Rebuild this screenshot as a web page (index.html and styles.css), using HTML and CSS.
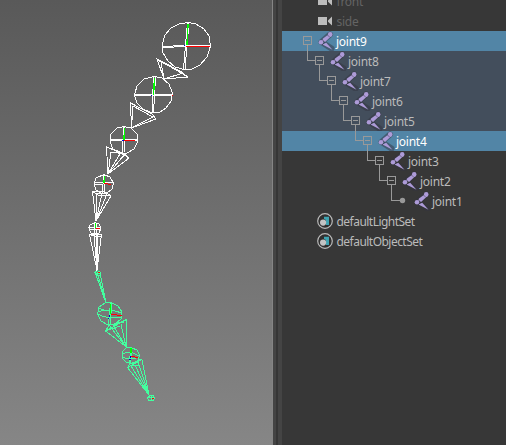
FILE: index.html
```html
<!DOCTYPE html>
<html lang="en">
<head>
<meta charset="utf-8">
<title>Outliner</title>
<link rel="stylesheet" href="styles.css">
</head>
<body>
<svg class="defs" width="0" height="0" aria-hidden="true">
  <symbol id="joint" viewBox="0 0 18 20">
    <path class="bone-outline" d="M13 3.5L4.5 11M4.500 11L14.500 17.500"/>
    <path class="bone" d="M11.500 3.500L6 7.500L5 9.500L8 11L14.500 5ZM5.500 13.500L9.200 11.800L15.500 18.800Z"/>
    <circle class="bone" cx="13.200" cy="3.400" r="2.300"/>
    <circle class="bone" cx="4" cy="11.200" r="2.300"/>
    <path class="bone-gap" d="M10.300 3.800L12.800 6.300M5.200 8.200L7.500 11.300L5 14"/>
  </symbol>
  <symbol id="toggle" viewBox="0 0 18 20">
    <path class="wire" d="M8.5 5.5H16.5V13.5H8.5ZM10 9.5H15"/>
  </symbol>
  <symbol id="camera" viewBox="0 0 18 20">
    <path class="camera" d="M1 6H10V14H1ZM11 9.5L15 5.5V14.5L11 10.8Z"/>
  </symbol>
  <symbol id="set" viewBox="0 0 18 20">
    <circle class="set-back" cx="8" cy="10" r="7.3"/>
    <path class="set-cube" d="M7 5.7H12V14H9V9L7 8Z"/>
    <circle class="set-ball" cx="6.1" cy="11.6" r="3.1"/>
  </symbol>
</svg>
<main class="app">
  <section class="viewport">
    <svg class="scene" viewBox="0 0 272 445" width="272" height="445">
      <g class="white">
        <path d="M188 22.5L196 24L204 29L209 36L210.500 46L207 57L200 65L192 69L184 69.500L175 67L168 61L163 53L162 45L165 35L171 28L179 24ZM187.500 23L185.500 45L183.500 69M189 23L187 45L185 69M162 46.500L185 45.500H210M163 47.500L185 46.500"/>
        <path d="M157 59L164 79L188 77ZM157 59L180 71L188 77M157 59L161 62L164 79L183 73L161 62"/>
        <path d="M154.500 76.500L162 78L169 84L172.500 93L171 101L166 108L160 112L152 113L143 109L137 103L134.500 95L137 86L144 79ZM153.500 77L152 113M155.500 77L153.500 113M135 94.500H172M135 95.500H172"/>
        <path d="M130.500 103L131.500 128L156 119L152 114ZM131.500 128L133 106L153 117L131.500 128"/>
        <path d="M124 126.500L131 128L137 134L137.500 142L134 149L127 153L120 153L113 149L110 142L111 134L117 128ZM123.500 127L122.500 153M125 127L124 153M110 139.500H137M110 140.500H137"/>
        <path d="M106.500 147L108 174L129 158L121 153ZM108 174L111 152L125 154L108 174L120 154M106.500 147L123 153L129 158"/>
        <path d="M104 174.500L110 177L113.500 183L112 189L107 193L101 193L96 190L94 184L96 178ZM103.500 175L102.500 193M105 175L104 193M94 182.500H113M95 184.500L103 184L113 182"/>
        <path d="M92.500 191.500L96 221L111 196L105 192ZM96 221L96 194L102 193L96 221L107 194M92.500 191.500L98 195L111 196M98 193H108"/>
        <path d="M95 222.500L99 224L101 228L99 233L95 234L91 233L89 229L90 225ZM94.500 223V234M96.500 223V234M88 227.500H101M89 229.500H101"/>
        <path d="M89.500 234.500H101.500L97 270ZM94 235L97 270L96 236M98 235L97 270M89 234L94 236H101M96.500 235V271"/>
      </g>
      <g class="green">
        <path d="M97.500 270.500L100 272.500L97 275L94.500 272.500ZM95 272L106 303M97 272L106 303M100 273L106 303M95 273H100M96 275H101"/>
        <path d="M111 302.500L118 306L122 312L121 319L115 324L108 325L101 321L97.500 314L99 307L105 303ZM110.500 303L108.500 325M112 303L111 313L110 325M98 312Q108 308 122 313M98 314Q105 319 121 317M99 308L106 311"/>
        <path d="M105.500 331L126.500 347V319.500L105.500 331L109 325L116 324L126 320M109 325L126 347M113 325L126 347M121 324L126 347M105 331L120 326M109 325L124 322"/>
        <path d="M131 347.500L137 350L139.500 355L138 361L132 364L126 362L122 358L122 352L126 348ZM130.500 348L129.500 364M132 348L130.500 364M122 354Q130 350 139 356M122 357Q130 361 139 357"/>
        <path d="M127.500 367.500L149 395L142 359.500L127.500 367.500L131 362M131 366L149 395L135 365M138 362L149 395M130 364L142 359M132 366L140 365"/>
        <path d="M150 395.500H153L155 398L153 400.500H149L147.500 398ZM148 397.500H155M151.500 395V401"/>
      </g>
      <path class="axis-y" d="M188 24L187 45M154.500 78L153.500 95M124.500 128L124 140M104.500 176L104 183M95.500 223V228M110.500 304V314M131 348V353"/>
      <path class="axis-x" d="M186 46.500H210M172 95.500H173M124 140.500H135M104 183.500L111 184.500M95.500 228.500H100M98 272.500H99.500M111 314.500L122 315.500M131 356.500L138 357.500M152 398.500H154"/>
      <path class="axis-z" d="M184 45.500H185M151 95.500H152M122 140.500H124M109.500 315V317M108 318.500H109M129 359.500H131M130.500 356V358"/>
    </svg>
  </section>
  <div class="splitter"></div>
  <section class="outliner">
    <div class="row muted"><svg class="icon"><use href="#camera"/></svg><span>front</span></div>
    <div class="row muted"><svg class="icon"><use href="#camera"/></svg><span>side</span></div>
    <div class="row node selected"><svg class="gutter"><use href="#toggle"/></svg><svg class="icon"><use href="#joint"/></svg><span>joint9</span></div>
    <div class="branch related">
      <div class="row node"><svg class="gutter"><path class="wire" d="M.5-6V9.500H8"/><use href="#toggle"/></svg><svg class="icon"><use href="#joint"/></svg><span>joint8</span></div>
      <div class="row node d2"><svg class="gutter"><path class="wire" d="M.5-6V9.500H8"/><use href="#toggle"/></svg><svg class="icon"><use href="#joint"/></svg><span>joint7</span></div>
      <div class="row node d3"><svg class="gutter"><path class="wire" d="M.5-6V9.500H8"/><use href="#toggle"/></svg><svg class="icon"><use href="#joint"/></svg><span>joint6</span></div>
      <div class="row node d4"><svg class="gutter"><path class="wire" d="M.5-6V9.500H8"/><use href="#toggle"/></svg><svg class="icon"><use href="#joint"/></svg><span>joint5</span></div>
    </div>
    <div class="row node d5 selected"><svg class="gutter"><path class="wire" d="M.5-6V9.500H8"/><use href="#toggle"/></svg><svg class="icon"><use href="#joint"/></svg><span>joint4</span></div>
    <div class="row node d6"><svg class="gutter"><path class="wire" d="M.5-6V9.500H8"/><use href="#toggle"/></svg><svg class="icon"><use href="#joint"/></svg><span>joint3</span></div>
    <div class="row node d7"><svg class="gutter"><path class="wire" d="M.5-6V9.500H8"/><use href="#toggle"/></svg><svg class="icon"><use href="#joint"/></svg><span>joint2</span></div>
    <div class="row node d8"><svg class="gutter"><path class="wire" d="M.5-6V9.500H10"/><circle class="leaf" cx="11.500" cy="9.500" r="2.700"/></svg><svg class="icon"><use href="#joint"/></svg><span>joint1</span></div>
    <div class="row set"><svg class="icon"><use href="#set"/></svg><span>defaultLightSet</span></div>
    <div class="row set"><svg class="icon"><use href="#set"/></svg><span>defaultObjectSet</span></div>
  </section>
</main>
</body>
</html>
```
FILE: styles.css
```css
body {
  margin: 0;
  overflow: hidden;
  background: #373737;
  color: #bbb;
  font: 12px/20px "Noto Sans", "Open Sans", sans-serif;
}

.defs { position: absolute; }

.app {
  display: grid;
  grid-template-columns: 272px 10px 1fr;
  height: 445px;
}

.viewport { background: linear-gradient(#595959, #868686); }

.scene {
  display: block;
  fill: none;
  stroke-width: 1;
  shape-rendering: crispEdges;
}

.white { stroke: #fff; }
.green { stroke: #43ff9f; }
.axis-x { stroke: #f00; }
.axis-y { stroke: #0f0; stroke-width: 1.400; }
.axis-z { stroke: #00c; }

.splitter {
  background: linear-gradient(90deg, #858585 1px, #444 1px 4px, #363636 4px 6px, #444 6px);
}

.outliner {
  height: 454px;
  margin-top: -9px;
  overflow: hidden;
}

.row {
  display: flex;
  height: 20px;
  padding-left: 35px;
  letter-spacing: -.25px;
  white-space: nowrap;
}

.row span { margin-left: 1.500px; padding-top: 1px; }
.set { letter-spacing: -.530px; }
.row.node { padding-left: 13px; }
.node span { margin-left: 1px; }
.row.node .gutter { margin-right: 4px; }
.branch .row.node { padding-left: 25px; }
.branch .row.node.d2 { padding-left: 37px; }
.branch .row.node.d3 { padding-left: 49px; }
.branch .row.node.d4 { padding-left: 61px; }
.row.node.d5 { padding-left: 73px; }
.row.node.d6 { padding-left: 85px; }
.row.node.d7 { padding-left: 97px; }
.row.node.d8 { padding-left: 109px; }

.related { background: #434e5c; }
.selected { background: #5285a6; color: #fff; }
.muted span { color: #646464; }

.icon {
  flex: none;
  width: 18px;
  height: 20px;
}

.gutter {
  flex: none;
  width: 18px;
  height: 20px;
  overflow: visible;
}

.bone { fill: #ad9bd8; }
.bone-gap { fill: none; stroke: #343440; stroke-width: .700; opacity: .7; }
.bone-outline { fill: none; stroke: #343440; stroke-width: 6; stroke-linecap: round; opacity: .5; }
.wire { fill: none; stroke: #999; shape-rendering: crispEdges; }
.leaf { fill: #999; }
.camera { fill: #bdbdbd; }
.set-back { fill: #303030; stroke: #bbb; stroke-width: 1.200; }
.set-cube { fill: #3ea4b2; }
.set-ball { fill: #c4c4c4; }
```
